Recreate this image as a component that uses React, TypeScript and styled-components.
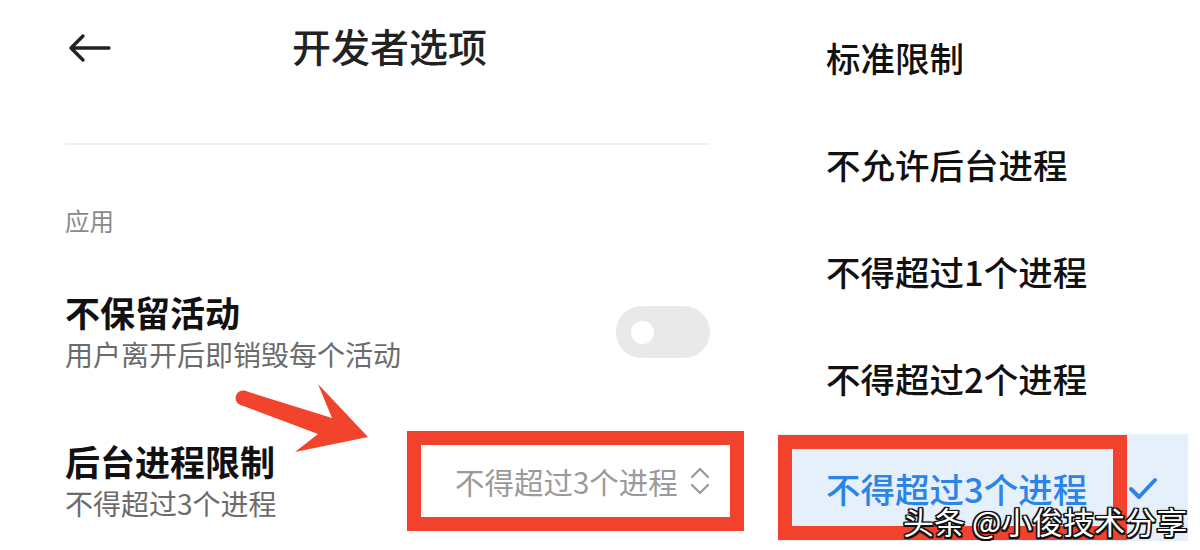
import React from 'react';
import styled, { createGlobalStyle } from 'styled-components';

const Global = createGlobalStyle`
  html, body { margin: 0; padding: 0; background: #fff; }
  body { font-family: "Noto Sans CJK SC", "Noto Sans", sans-serif; }
`;

const RED = '#f2412d';

const Page = styled.div`
  position: relative;
  width: 1200px;
  height: 550px;
  overflow: hidden;
  display: flex;
  background: #fff;
`;

const Settings = styled.div`
  width: 760px;
  flex: none;
  box-sizing: border-box;
  padding: 0 50px 0 65px;
  display: flex;
  flex-direction: column;
`;

const Header = styled.div`
  height: 96px;
  display: flex;
  align-items: center;
`;

const BackButton = styled.div`
  width: 44px;
  height: 30px;
  margin-left: 3px;
  display: flex;
`;

const Title = styled.h1`
  margin: 0 0 6px 180px;
  font-size: 39px;
  line-height: 50px;
  font-weight: 500;
  color: #222;
`;

const Divider = styled.div`
  margin-top: 47px;
  height: 2px;
  background: #efefef;
`;

const SectionLabel = styled.div`
  margin-top: 59px;
  font-size: 24.5px;
  line-height: 34px;
  color: #8a8a8a;
`;

const Row = styled.div<{ $gap: number }>`
  margin-top: ${(p) => p.$gap}px;
  display: flex;
  align-items: center;
  justify-content: space-between;
`;

const RowText = styled.div`
  display: flex;
  flex-direction: column;
`;

const RowTitle = styled.div`
  font-size: 35px;
  line-height: 44px;
  font-weight: 700;
  color: #111;
`;

const RowSub = styled.div`
  font-size: 28px;
  line-height: 40px;
  color: #6b6b6b;
`;

const Toggle = styled.div`
  width: 94px;
  height: 52px;
  border-radius: 26px;
  background: #e9e9e9;
  display: flex;
  align-items: center;
  padding-left: 15px;
  box-sizing: border-box;
`;

const Knob = styled.div`
  width: 23px;
  height: 23px;
  border-radius: 50%;
  background: #fff;
`;

const ValueBox = styled.div`
  box-sizing: border-box;
  width: 337px;
  height: 100px;
  margin-right: -34px;
  border: 14px solid ${RED};
  display: flex;
  align-items: center;
  padding: 0 16px 0 34px;
  gap: 11px;
`;

const ValueText = styled.span`
  font-size: 29.5px;
  line-height: 40px;
  color: #9a9a9a;
  white-space: nowrap;
`;

const Menu = styled.div`
  width: 440px;
  flex: none;
  padding-top: 6px;
  display: flex;
  flex-direction: column;
`;

const Option = styled.div`
  height: 107px;
  box-sizing: border-box;
  padding: 0 0 5px 66px;
  display: flex;
  align-items: center;
  font-size: 34.5px;
  font-weight: 500;
  color: #111;
  white-space: nowrap;
`;

const SelectedOption = styled.div`
  height: 107px;
  width: 410px;
  margin-left: 18px;
  background: #e6f0fb;
  display: flex;
  align-items: center;
`;

const Highlight = styled.div`
  box-sizing: border-box;
  width: 349px;
  height: 105px;
  border: 14px solid ${RED};
  display: flex;
  align-items: center;
  padding-left: 34px;
  font-size: 34.5px;
  font-weight: 500;
  color: #2c84e6;
  white-space: nowrap;
`;

const CheckMark = styled.svg`
  margin-left: 1px;
  margin-top: 2px;
`;

const Watermark = styled.div`
  position: absolute;
  left: 903px;
  top: 501px;
  font-size: 31px;
  line-height: 40px;
  color: #fff;
  white-space: nowrap;
  text-shadow: -1.5px 0 #111, 1.5px 0 #111, 0 -1.5px #111, 0 1.5px #111,
    -1.5px -1.5px #111, 1.5px 1.5px #111, -1.5px 1.5px #111, 1.5px -1.5px #111,
    0 0 3px rgba(0, 0, 0, 0.6);
`;

const PointerArrow = styled.svg`
  position: absolute;
  left: 0;
  top: 0;
  pointer-events: none;
`;

export default function App() {
  return (
    <>
      <Global />
      <Page>
        <Settings>
          <Header>
            <BackButton>
              <svg width="44" height="30" viewBox="0 0 44 30">
                <path d="M41 15 H4 M15 3 L3 15 L15 27" fill="none" stroke="#222" strokeWidth="3.4" strokeLinecap="round" strokeLinejoin="round" />
              </svg>
            </BackButton>
            <Title>开发者选项</Title>
          </Header>
          <Divider />
          <SectionLabel>应用</SectionLabel>
          <Row $gap={52}>
            <RowText>
              <RowTitle>不保留活动</RowTitle>
              <RowSub>用户离开后即销毁每个活动</RowSub>
            </RowText>
            <Toggle>
              <Knob />
            </Toggle>
          </Row>
          <Row $gap={57}>
            <RowText>
              <RowTitle>后台进程限制</RowTitle>
              <RowSub>不得超过3个进程</RowSub>
            </RowText>
            <ValueBox>
              <ValueText>不得超过3个进程</ValueText>
              <svg width="22" height="32" viewBox="0 0 22 32">
                <path d="M3 12 L11 4 L19 12 M3 20 L11 28 L19 20" fill="none" stroke="#9a9a9a" strokeWidth="2.3" strokeLinecap="round" strokeLinejoin="round" />
              </svg>
            </ValueBox>
          </Row>
        </Settings>
        <Menu>
          <Option>标准限制</Option>
          <Option>不允许后台进程</Option>
          <Option>不得超过1个进程</Option>
          <Option>不得超过2个进程</Option>
          <SelectedOption>
            <Highlight>不得超过3个进程</Highlight>
            <CheckMark width="30" height="26" viewBox="0 0 30 26">
              <path d="M3 13 L11 21 L27 4" fill="none" stroke="#2c84e6" strokeWidth="4" strokeLinecap="round" strokeLinejoin="round" />
            </CheckMark>
          </SelectedOption>
        </Menu>
        <PointerArrow width="1200" height="550" viewBox="0 0 1200 550">
          <circle cx="243" cy="398" r="7.5" fill="#f2432c" />
          <polygon points="244,390.5 332,418 318,384 368,437 295,452 318,434 241,405" fill="#f2432c" />
        </PointerArrow>
        <Watermark>头条 @小俊技术分享</Watermark>
      </Page>
    </>
  );
}
